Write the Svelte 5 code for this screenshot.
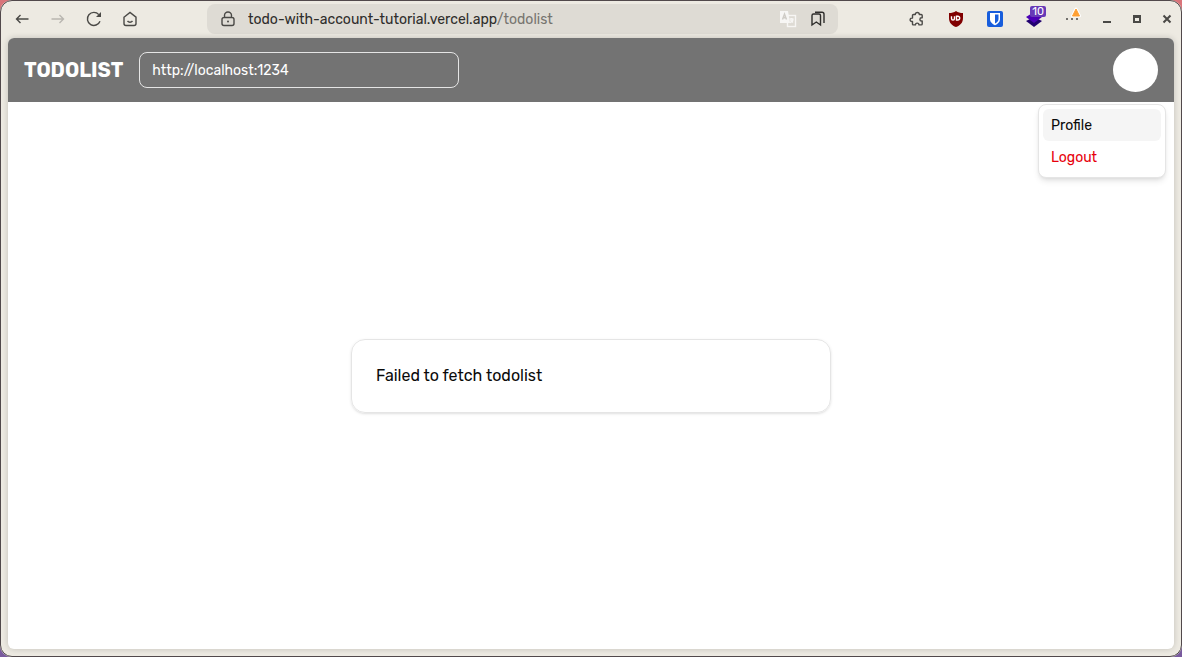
<script>
  let server = $state('http://localhost:1234');
</script>

<div class="desktop">
  <div class="window">
    <header class="toolbar">
      <nav class="history" aria-label="Browser navigation">
        <button aria-label="Back">
          <svg width="16" height="16" viewBox="0 0 16 16"><path d="M14.500 8H2.500M6.500 4 2.500 8l4 4" /></svg>
        </button>
        <button class="faded" aria-label="Forward">
          <svg width="16" height="16" viewBox="0 0 16 16"><path d="M1.500 8h12M9.500 4l4 4-4 4" /></svg>
        </button>
        <button aria-label="Reload">
          <svg width="16" height="16" viewBox="0 0 16 16"><path d="M14 10.200A6.500 6.500 0 1 1 12.800 3.600" /><path class="solid" d="M15 1v5H10z" /></svg>
        </button>
        <button aria-label="Home">
          <svg width="16" height="16" viewBox="0 0 16 16"><path d="M2 6.200 8 1.500l6 4.700v6.300a2 2 0 0 1-2 2H4a2 2 0 0 1-2-2zM5.500 10c1.300 1.600 3.700 1.600 5 0" /></svg>
        </button>
      </nav>

      <div class="address">
        <svg class="lock" width="16" height="16" viewBox="0 0 16 16"><path d="M4.500 6.500V4.500a3.500 3.500 0 0 1 7 0v2M4 6.500h8a2 2 0 0 1 2 2v4a2 2 0 0 1-2 2H4a2 2 0 0 1-2-2v-4a2 2 0 0 1 2-2z" /><circle class="solid" cx="8" cy="10.500" r="1" /></svg>
        <span class="url">todo-with-account-tutorial.vercel.app<span class="path">/todolist</span></span>
        <button aria-label="Translate page">
          <svg width="18" height="18" viewBox="0 0 18 18">
            <rect x="8.500" y="5.500" width="8" height="11" class="translate-line" />
            <path class="translate-line" d="M10.500 9h4M12.500 8v1M14 9c0 1.500-1.500 3-3 3.500M11.500 10l2.500 2.500" />
            <path class="translate-front" d="M1 1h8l2 12H1z" />
            <path class="translate-glyph" d="M3.500 9.500 5.500 4l2 5.500M4.200 7.800h2.600" />
          </svg>
        </button>
        <button class="bookmarks" aria-label="Bookmarks">
          <svg width="16" height="16" viewBox="0 0 16 16"><path d="M2 4.500a1.500 1.500 0 0 1 1.500-1.500h5.500a1.500 1.500 0 0 1 1.500 1.500v9.500L6.300 11 2 14zM5 1.200h7a2 2 0 0 1 2 2v8.800" /></svg>
        </button>
      </div>

      <div class="tools">
        <div class="extensions">
          <button aria-label="Extensions">
            <svg width="16" height="16" viewBox="0 0 16 16"><path stroke-linejoin="round" d="M4.500 3.500h1.800a2 2 0 1 1 4 0h1.900q1 0 1 1v2.300h-.7a1.600 1.600 0 0 0 0 3.200h.7v2.900q0 1-1 1h-2.200a1.800 1.800 0 0 0-3.600 0H4.500q-1 0-1-1V10.500h-.7a1.700 1.700 0 1 1 0-3.400h.7V4.500q0-1 1-1z" /></svg>
          </button>
          <button aria-label="uBlock Origin">
            <svg width="16" height="16" viewBox="0 0 16 16"><path fill="#800000" stroke="none" d="M8 0c2 1.500 4.300 2 7 2v5c0 5-3 7.500-7 9-4-1.500-7-4-7-9V2c2.700 0 5-.5 7-2z" /><path class="ublock-mark" d="M3.500 5.200v2.400a1.500 1.500 0 0 0 3 0V5.200M8.500 5.200V9h1.300a1.900 1.900 0 0 0 0-3.800z" /></svg>
          </button>
          <button aria-label="Bitwarden">
            <svg width="16" height="16" viewBox="0 0 16 16"><rect width="16" height="16" rx="2" fill="#175ddc" stroke="none" /><path fill="#fff" stroke="none" d="M3 2h10v6.200c0 2.800-2.300 4.800-5 6-2.700-1.200-5-3.200-5-6z" /><path fill="#175ddc" stroke="none" d="M8 3.500h3.500V8c0 2-1.600 3.500-3.500 4.600z" /></svg>
          </button>
          <button class="stack" aria-label="Stacked pages, 10">
            <svg width="16" height="16" viewBox="0 0 16 16"><path fill="#21006f" stroke="none" d="m0 10 8-4 8 4-8 6z" /><path fill="#4b00b5" stroke="none" d="m0 6 8-5 8 5-8 6z" /></svg>
            <span class="badge">10</span>
          </button>
          <button class="more" aria-label="More">
            <svg width="16" height="16" viewBox="0 0 16 16"><g class="solid"><circle cx="2" cy="8" r="1" /><circle cx="7" cy="8" r="1" /><circle cx="12" cy="8" r="1" /></g></svg>
            <svg class="alert" width="12" height="12" viewBox="0 0 12 12"><path fill="#fff" stroke="#fff" stroke-width="3" stroke-linejoin="round" d="M6 2 9.500 9h-7z" /><path fill="#ffa033" stroke="#ffa033" stroke-width="1" stroke-linejoin="round" d="M6 2 9.500 9h-7z" /></svg>
          </button>
        </div>
        <div class="controls">
          <button aria-label="Minimize"><svg width="16" height="16" viewBox="0 0 16 16"><path class="heavy" d="M4 11h8" /></svg></button>
          <button aria-label="Maximize"><svg width="16" height="16" viewBox="0 0 16 16"><path class="solid" fill-rule="evenodd" d="M4 4h8v8H4zM6 7v3h4V7z" /></svg></button>
          <button aria-label="Close"><svg width="16" height="16" viewBox="0 0 16 16"><path class="heavy" d="m4.500 4.500 7 7m0-7-7 7" /></svg></button>
        </div>
      </div>
    </header>

    <div class="page">
      <header class="appbar">
        <h1>TODOLIST</h1>
        <input type="text" aria-label="Server address" bind:value={server} />
        <div class="account">
          <button class="avatar" aria-label="Account menu"></button>
          <div class="menu" role="menu">
            <button class="active" role="menuitem">Profile</button>
            <button class="danger" role="menuitem">Logout</button>
          </div>
        </div>
      </header>
      <main>
        <div class="card">Failed to fetch todolist</div>
      </main>
    </div>
  </div>
</div>

<style>
  :global(body) {
    margin: 0;
  }
  * {
    box-sizing: border-box;
  }
  .desktop {
    height: 100vh;
    background: linear-gradient(#d9747a 50%, #795a9e 50%);
    font-family: Rubik, Roboto, sans-serif;
    font-size: 14px;
  }
  .window {
    display: flex;
    flex-direction: column;
    height: 100%;
    padding: 0 8px 8px;
    border-radius: 12px;
    background: #edeae2;
    outline: 1px solid #51494b;
    outline-offset: -1px;
  }
  button {
    display: grid;
    place-items: center;
    padding: 0;
    border: 0;
    background: none;
    color: inherit;
    font: inherit;
  }
  svg {
    display: block;
    fill: none;
    stroke: currentColor;
    stroke-width: 1.4;
  }
  .solid {
    fill: currentColor;
    stroke: none;
  }
  .heavy {
    stroke-width: 2;
  }
  .toolbar {
    display: flex;
    align-items: center;
    gap: 59px;
    height: 38px;
    margin: 0 -8px;
    padding-left: 4px;
    color: #4a4946;
  }
  .history,
  .tools,
  .extensions,
  .controls {
    display: flex;
  }
  .history button {
    width: 36px;
    height: 30px;
  }
  .history .faded {
    color: #b9b6b0;
  }
  .address {
    display: flex;
    flex: 1;
    align-items: center;
    min-width: 0;
    height: 30px;
    padding: 0 5px 0 13px;
    border-radius: 8px;
    background: #dedbd4;
  }
  .url {
    flex: 1;
    min-width: 0;
    margin-left: 12px;
    overflow: hidden;
    color: #2e2d2b;
    white-space: nowrap;
  }
  .path {
    color: #777570;
  }
  .address button {
    width: 30px;
    height: 30px;
  }
  .bookmarks {
    color: #2e2d2b;
  }
  .translate-line {
    stroke: #f7f6f4;
  }
  .translate-front {
    fill: #f7f6f4;
    stroke: none;
  }
  .translate-glyph {
    stroke: #cfccc6;
  }
  .extensions button {
    position: relative;
    width: 39px;
    height: 30px;
  }
  .controls button {
    width: 30px;
    height: 30px;
  }
  .ublock-mark {
    stroke: #fff;
  }
  .badge {
    position: absolute;
    top: 2px;
    right: 7px;
    padding: 0 2px;
    border-radius: 2px;
    background: #673ab7;
    color: #fff;
    font-size: 11px;
    line-height: 11px;
  }
  .alert {
    position: absolute;
    top: 3px;
    right: 10px;
    overflow: visible;
  }
  .page {
    display: flex;
    flex: 1;
    flex-direction: column;
    border-radius: 6px;
    background: #fff;
    box-shadow: 0 0 6px #0000002e;
  }
  .appbar {
    display: flex;
    align-items: center;
    gap: 16px;
    height: 64px;
    padding: 0 16px;
    border-radius: 6px 6px 0 0;
    background: #737373;
    color: #fff;
  }
  h1 {
    margin: 0;
    font-size: 20px;
    font-weight: 700;
    line-height: 28px;
  }
  input {
    width: 320px;
    height: 36px;
    padding: 0 12px;
    border: 1px solid #e5e5e5;
    border-radius: 8px;
    outline: 0;
    background: transparent;
    color: #fff;
    font: inherit;
  }
  .account {
    position: relative;
    margin-left: auto;
  }
  .avatar {
    width: 45px;
    height: 44px;
    border-radius: 50%;
    background: #fff;
  }
  .menu {
    position: absolute;
    top: 56px;
    right: -8px;
    width: 128px;
    padding: 4px;
    border: 1px solid #e5e5e5;
    border-radius: 8px;
    background: #fff;
    box-shadow: 0 4px 6px -1px #0000001a, 0 2px 4px -2px #0000001a;
    color: #0a0a0a;
  }
  .menu button {
    justify-content: start;
    width: 100%;
    height: 32px;
    padding: 0 8px;
    border-radius: 6px;
  }
  .menu .active {
    background: #f5f5f5;
  }
  .menu .danger {
    color: #e7000b;
  }
  main {
    display: grid;
    flex: 1;
    place-items: center;
    padding: 0 24px;
  }
  .card {
    width: 100%;
    max-width: 480px;
    padding: 24px;
    border: 1px solid #e5e5e5;
    border-radius: 14px;
    box-shadow: 0 1px 3px #0000001a, 0 1px 2px -1px #0000001a;
    color: #0a0a0a;
    font-size: 16px;
    line-height: 24px;
  }
</style>
